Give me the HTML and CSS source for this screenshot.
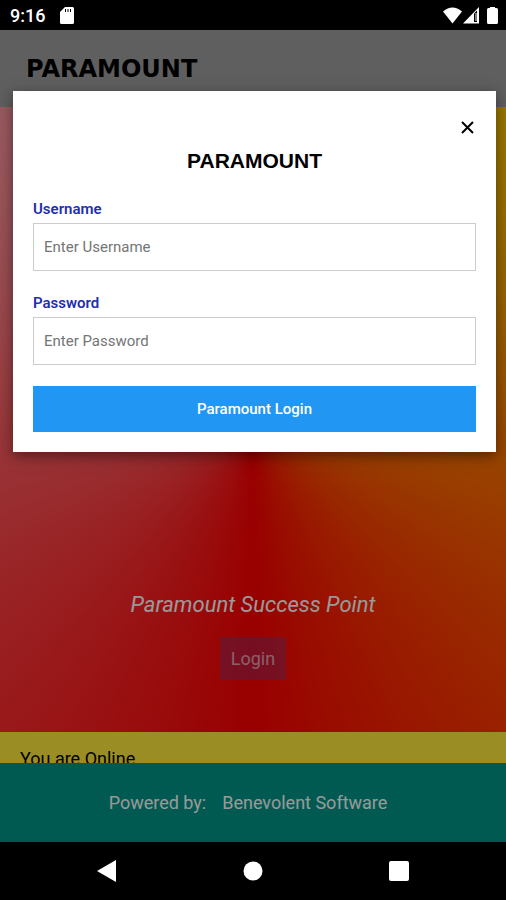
FILE: index.html
```html
<!DOCTYPE html>
<html lang="en">
<head>
    <meta charset="UTF-8">
    <meta name="viewport" content="width=device-width, initial-scale=1.0">
    <title>Paramount</title>
    <link rel="stylesheet" href="styles.css">
</head>
<body>
    <div class="status-bar">
        <span>9:16</span>
        <svg width="14" height="17" viewBox="0 0 14 17"><path fill="#fff" d="M5 0h7.500q1.500 0 1.500 1.500v14q0 1.500-1.500 1.500h-11q-1.500 0-1.500-1.500V5z"/><path stroke="#000" stroke-width="1" d="M5.500 2v3M8 2v3M10.500 2v3"/></svg>
        <div class="status-icons">
            <svg width="19" height="17" viewBox="0 0 19 17"><path fill="#fff" d="M0 4.500Q9.500-3.500 19 4.500L9.500 16.500z"/></svg>
            <svg width="16" height="17" viewBox="0 0 16 17"><path fill="#fff" d="M16 0v16.500H0z"/><path fill="#000" d="M11 6.500l3-3V15h-3z"/><path fill="#fff" d="M12.500 6h1v8h-1z"/></svg>
            <svg class="battery" width="11" height="17" viewBox="0 0 11 17"><path fill="#fff" d="M3 0h5v1h1.500q1.500 0 1.500 1.500v13q0 1.500-1.500 1.500h-8Q0 17 0 15.500v-13Q0 1 1.500 1H3z"/></svg>
        </div>
    </div>

    <div class="app">
        <header class="header">PARAMOUNT</header>
        <main class="hero">
            <p class="tagline">Paramount Success Point</p>
            <button type="button" class="open-login">Login</button>
        </main>
        <div class="online">You are Online</div>
        <footer class="footer">
            <span>Powered by:</span>
            <a href="#">Benevolent Software</a>
        </footer>

        <div class="overlay">
            <div class="modal" role="dialog" aria-labelledby="modalTitle">
                <button type="button" class="close" aria-label="Close">
                    <svg width="13" height="13" viewBox="0 0 13 13"><path stroke="#000" stroke-width="2" d="M1 1l11 11M12 1L1 12"/></svg>
                </button>
                <h2 id="modalTitle">PARAMOUNT</h2>
                <form action="" method="POST">
                    <label for="username">Username</label>
                    <input type="text" id="username" name="username" placeholder="Enter Username" required>
                    <label for="password">Password</label>
                    <input type="password" id="password" name="password" placeholder="Enter Password" required>
                    <button type="submit" class="submit">Paramount Login</button>
                </form>
            </div>
        </div>
    </div>

    <nav class="nav-bar">
        <button type="button" aria-label="Back"><svg width="20" height="22" viewBox="0 0 20 22"><path fill="#fff" d="M19 0v22L0 11z"/></svg></button>
        <button type="button" aria-label="Home"><svg width="20" height="20" viewBox="0 0 20 20"><circle cx="10" cy="10" r="9.500" fill="#fff"/></svg></button>
        <button type="button" aria-label="Recent"><svg width="20" height="20" viewBox="0 0 20 20"><rect width="20" height="20" rx="2" fill="#fff"/></svg></button>
    </nav>
</body>
</html>
```
FILE: styles.css
```css
* {
    box-sizing: border-box;
}

body {
    font-family: Roboto, sans-serif;
    background-color: #000;
    margin: 0;
    display: flex;
    flex-direction: column;
    min-height: 100vh;
}

button {
    font-family: inherit;
    border: none;
    cursor: pointer;
}

.status-bar {
    display: flex;
    align-items: center;
    gap: 15px;
    height: 30px;
    padding: 0 8px 0 10px;
    color: #fff;
    font-size: 18px;
    font-weight: 500;
}

.status-icons {
    display: flex;
    gap: 1px;
    margin-left: auto;
}

.battery {
    margin-left: 7px;
}

.app {
    position: relative;
    flex: 1;
    display: flex;
    flex-direction: column;
}

.header {
    padding: 25px 26px 23px;
    background-color: #9e9e9e;
    color: #000;
    font-family: "DejaVu Sans", sans-serif;
    font-size: 24px;
    line-height: 29px;
    font-weight: bold;
}

.hero {
    flex: 1;
    display: flex;
    flex-direction: column;
    align-items: center;
    justify-content: flex-end;
    padding-bottom: 52px;
    background: conic-gradient(yellow, red, pink);
}

.tagline {
    margin: 0 0 16px;
    color: #fff;
    font-size: 22px;
    line-height: 32px;
    font-style: italic;
}

.open-login {
    padding: 9px 11px;
    background-color: rgba(63, 81, 181, 0.3);
    color: rgba(255, 255, 255, 0.6);
    font-size: 18px;
    line-height: 25px;
}

.online {
    height: 31px;
    padding: 14px 20px 0;
    overflow: hidden;
    background-color: #ffeb3b;
    color: #000;
    font-size: 18px;
    line-height: 25px;
}

.footer {
    display: flex;
    justify-content: center;
    gap: 16px;
    padding: 27px 26px 27px 16px;
    background-color: #009688;
    color: #fff;
    font-size: 18px;
    line-height: 25px;
}

.footer a {
    color: #fff;
    text-decoration: none;
}

.overlay {
    position: absolute;
    inset: 0;
    padding: 61px 10px 0 13px;
    background-color: rgba(0, 0, 0, 0.4);
}

.modal {
    padding: 20px;
    background-color: #fff;
    box-shadow: 0 4px 10px rgba(0, 0, 0, 0.3), 0 4px 20px rgba(0, 0, 0, 0.2);
}

.close {
    display: block;
    margin-left: auto;
    padding: 10px 2px;
    background: none;
}

.close svg {
    display: block;
}

.modal h2 {
    margin: 4px 0 24px;
    font-family: "Liberation Sans", Arial, sans-serif;
    font-size: 21px;
    line-height: 26px;
    text-align: center;
}

form {
    display: flex;
    flex-direction: column;
}

label {
    margin-bottom: 2px;
    color: #1f2fae;
    font-size: 15px;
    line-height: 23px;
    font-weight: 600;
}

input {
    width: 100%;
    height: 48px;
    margin: 0 0 21px;
    padding: 0 10px;
    border: 1px solid #ccc;
    font-family: inherit;
    font-size: 15px;
}

input::placeholder {
    color: #757575;
}

.submit {
    padding: 10px;
    background-color: #2196f3;
    color: #fff;
    font-size: 15px;
    line-height: 26px;
    font-weight: 500;
}

.nav-bar {
    display: flex;
    justify-content: center;
    gap: 106px;
    height: 58px;
}

.nav-bar button {
    display: flex;
    align-items: center;
    justify-content: center;
    width: 40px;
    padding: 0;
    background: none;
}
```
